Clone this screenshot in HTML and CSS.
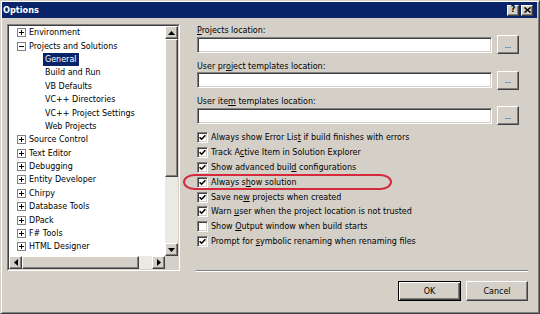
FILE: index.html
```html
<!DOCTYPE html>
<html>
<head>
<meta charset="utf-8">
<title>Options</title>
<link rel="stylesheet" href="styles.css">
</head>
<body>
<div class="window">
  <div class="titlebar">
    <span class="title">Options</span>
    <span class="tbtn raised">?</span>
    <span class="tbtn raised"><svg width="7" height="6" viewBox="0 0 7 6"><path d="M0.5 0.5 L6.5 5.5 M6.5 0.5 L0.5 5.5" stroke="#000" stroke-width="1.5"/></svg></span>
  </div>
  <div class="content">
    <div class="main">
      <div class="tree">
        <div class="tree-inner">
          <div class="nodes">
            <div class="node"><svg class="exp" viewBox="0 0 9 9"><rect x="0.5" y="0.5" width="8" height="8" fill="#fff" stroke="#808080"/><path d="M2 4.5h5M4.5 2v5" stroke="#000"/></svg><span class="lbl">Environment</span></div>
            <div class="node"><svg class="exp" viewBox="0 0 9 9"><rect x="0.5" y="0.5" width="8" height="8" fill="#fff" stroke="#808080"/><path d="M2 4.5h5" stroke="#000"/></svg><span class="lbl">Projects and Solutions</span></div>
            <div class="node child"><span class="lbl sel">General</span></div>
            <div class="node child"><span class="lbl">Build and Run</span></div>
            <div class="node child"><span class="lbl">VB Defaults</span></div>
            <div class="node child"><span class="lbl">VC++ Directories</span></div>
            <div class="node child"><span class="lbl">VC++ Project Settings</span></div>
            <div class="node child"><span class="lbl">Web Projects</span></div>
            <div class="node"><svg class="exp" viewBox="0 0 9 9"><rect x="0.5" y="0.5" width="8" height="8" fill="#fff" stroke="#808080"/><path d="M2 4.5h5M4.5 2v5" stroke="#000"/></svg><span class="lbl">Source Control</span></div>
            <div class="node"><svg class="exp" viewBox="0 0 9 9"><rect x="0.5" y="0.5" width="8" height="8" fill="#fff" stroke="#808080"/><path d="M2 4.5h5M4.5 2v5" stroke="#000"/></svg><span class="lbl">Text Editor</span></div>
            <div class="node"><svg class="exp" viewBox="0 0 9 9"><rect x="0.5" y="0.5" width="8" height="8" fill="#fff" stroke="#808080"/><path d="M2 4.5h5M4.5 2v5" stroke="#000"/></svg><span class="lbl">Debugging</span></div>
            <div class="node"><svg class="exp" viewBox="0 0 9 9"><rect x="0.5" y="0.5" width="8" height="8" fill="#fff" stroke="#808080"/><path d="M2 4.5h5M4.5 2v5" stroke="#000"/></svg><span class="lbl">Entity Developer</span></div>
            <div class="node"><svg class="exp" viewBox="0 0 9 9"><rect x="0.5" y="0.5" width="8" height="8" fill="#fff" stroke="#808080"/><path d="M2 4.5h5M4.5 2v5" stroke="#000"/></svg><span class="lbl">Chirpy</span></div>
            <div class="node"><svg class="exp" viewBox="0 0 9 9"><rect x="0.5" y="0.5" width="8" height="8" fill="#fff" stroke="#808080"/><path d="M2 4.5h5M4.5 2v5" stroke="#000"/></svg><span class="lbl">Database Tools</span></div>
            <div class="node"><svg class="exp" viewBox="0 0 9 9"><rect x="0.5" y="0.5" width="8" height="8" fill="#fff" stroke="#808080"/><path d="M2 4.5h5M4.5 2v5" stroke="#000"/></svg><span class="lbl">DPack</span></div>
            <div class="node"><svg class="exp" viewBox="0 0 9 9"><rect x="0.5" y="0.5" width="8" height="8" fill="#fff" stroke="#808080"/><path d="M2 4.5h5M4.5 2v5" stroke="#000"/></svg><span class="lbl">F# Tools</span></div>
            <div class="node"><svg class="exp" viewBox="0 0 9 9"><rect x="0.5" y="0.5" width="8" height="8" fill="#fff" stroke="#808080"/><path d="M2 4.5h5M4.5 2v5" stroke="#000"/></svg><span class="lbl">HTML Designer</span></div>
          </div>
          <div class="vscroll">
            <div class="sbtn raised"><svg width="7" height="4" viewBox="0 0 7 4"><path d="M3.5 0L7 4H0Z"/></svg></div>
            <div class="vthumb raised"></div>
            <div class="track"></div>
            <div class="sbtn raised"><svg width="7" height="4" viewBox="0 0 7 4"><path d="M0 0H7L3.5 4Z"/></svg></div>
          </div>
          <div class="hscroll">
            <div class="sbtn raised"><svg width="4" height="7" viewBox="0 0 4 7"><path d="M4 0V7L0 3.5Z"/></svg></div>
            <div class="hthumb raised"></div>
            <div class="track"></div>
            <div class="sbtn raised"><svg width="4" height="7" viewBox="0 0 4 7"><path d="M0 0V7L4 3.5Z"/></svg></div>
          </div>
          <div class="corner"></div>
        </div>
      </div>
      <div class="right">
        <div class="fields">
          <div class="group">
            <div class="label"><u>P</u>rojects location:</div>
            <div class="field-row"><div class="textbox"></div><div class="browse raised">...</div></div>
          </div>
          <div class="group">
            <div class="label">User pr<u>o</u>ject templates location:</div>
            <div class="field-row"><div class="textbox"></div><div class="browse raised">...</div></div>
          </div>
          <div class="group">
            <div class="label">User ite<u>m</u> templates location:</div>
            <div class="field-row"><div class="textbox"></div><div class="browse raised">...</div></div>
          </div>
        </div>
        <div class="checks">
          <div class="check"><span class="cb"><svg width="7" height="7" viewBox="0 0 7 7"><path d="M0.6 3.2L2.6 5.2L6.4 1.2" fill="none" stroke="#000" stroke-width="1.6"/></svg></span><span>Always show Error Lis<u>t</u> if build finishes with errors</span></div>
          <div class="check"><span class="cb"><svg width="7" height="7" viewBox="0 0 7 7"><path d="M0.6 3.2L2.6 5.2L6.4 1.2" fill="none" stroke="#000" stroke-width="1.6"/></svg></span><span>Track A<u>c</u>tive Item in Solution Explorer</span></div>
          <div class="check"><span class="cb"><svg width="7" height="7" viewBox="0 0 7 7"><path d="M0.6 3.2L2.6 5.2L6.4 1.2" fill="none" stroke="#000" stroke-width="1.6"/></svg></span><span>Show advanced buil<u>d</u> configurations</span></div>
          <div class="check"><span class="cb"><svg width="7" height="7" viewBox="0 0 7 7"><path d="M0.6 3.2L2.6 5.2L6.4 1.2" fill="none" stroke="#000" stroke-width="1.6"/></svg></span><span>Always s<u>h</u>ow solution</span><span class="ring"></span></div>
          <div class="check"><span class="cb"><svg width="7" height="7" viewBox="0 0 7 7"><path d="M0.6 3.2L2.6 5.2L6.4 1.2" fill="none" stroke="#000" stroke-width="1.6"/></svg></span><span>Save ne<u>w</u> projects when created</span></div>
          <div class="check"><span class="cb"><svg width="7" height="7" viewBox="0 0 7 7"><path d="M0.6 3.2L2.6 5.2L6.4 1.2" fill="none" stroke="#000" stroke-width="1.6"/></svg></span><span>Warn <u>u</u>ser when the project location is not trusted</span></div>
          <div class="check"><span class="cb"></span><span>Show <u>O</u>utput window when build starts</span></div>
          <div class="check"><span class="cb"><svg width="7" height="7" viewBox="0 0 7 7"><path d="M0.6 3.2L2.6 5.2L6.4 1.2" fill="none" stroke="#000" stroke-width="1.6"/></svg></span><span>Prompt for <u>s</u>ymbolic renaming when renaming files</span></div>
        </div>
        <div class="separator"></div>
      </div>
    </div>
    <div class="buttons">
      <div class="btn default">OK</div>
      <div class="btn raised">Cancel</div>
    </div>
  </div>
</div>
</body>
</html>
```
FILE: styles.css
```css
* { box-sizing: border-box; }
html, body { margin: 0; padding: 0; }
body {
  width: 540px;
  height: 314px;
  overflow: hidden;
  font-family: "DejaVu Sans", "Liberation Sans", sans-serif;
  font-size: 8px;
  color: #000;
  background: #d4d0c8;
}
u { text-decoration: underline; text-underline-offset: 1px; }

.window {
  width: 540px;
  height: 314px;
  display: flex;
  flex-direction: column;
  background: #d4d0c8;
  border: 1px solid;
  border-color: #d4d0c8 #404040 #404040 #d4d0c8;
  box-shadow: inset 1px 1px #fff, inset -1px -1px #808080;
  padding: 1px 2px 2px 1px;
}

.raised {
  background: #d4d0c8;
  border: 1px solid;
  border-color: #fff #404040 #404040 #fff;
  box-shadow: inset -1px -1px #808080;
}

.titlebar {
  height: 16px;
  flex: none;
  background: #0a246a;
  display: flex;
  align-items: center;
  padding: 0 4px 0 1px;
  color: #fff;
  font-weight: bold;
  font-size: 8.2px;
}
.title { flex: 1; }
.tbtn {
  width: 12px;
  height: 11px;
  margin-left: 2px;
  display: flex;
  align-items: center;
  justify-content: center;
  color: #000;
  font-size: 8px;
  font-weight: bold;
  line-height: 1;
}

.content {
  flex: 1;
  display: flex;
  flex-direction: column;
  padding: 6px 9px 10px 5px;
}
.main {
  display: flex;
  gap: 16px;
  height: 248px;
  flex: none;
}

.tree {
  width: 173px;
  height: 247px;
  flex: none;
  border: 1px solid;
  border-color: #808080 #fff #fff #808080;
}
.tree-inner {
  height: 100%;
  border: 1px solid;
  border-color: #404040 #d4d0c8 #d4d0c8 #404040;
  background: #fff;
  display: grid;
  grid-template-columns: 156px 13px;
  grid-template-rows: 230px 13px;
}
.nodes { overflow: hidden; grid-column: 1; grid-row: 1; }
.node {
  height: 13.4px;
  display: flex;
  align-items: center;
  padding-left: 8px;
  white-space: nowrap;
}
.node.child { padding-left: 34px; }
.exp { width: 9px; height: 9px; flex: none; margin-right: 1px; }
.lbl { padding: 0 2px; height: 13px; line-height: 13px; }
.sel { background: #0a246a; color: #fff; }

.vscroll {
  grid-column: 2;
  grid-row: 1;
  display: flex;
  flex-direction: column;
  background: #ebe9e4;
}
.hscroll {
  grid-column: 1;
  grid-row: 2;
  display: flex;
  background: #ebe9e4;
}
.corner { grid-column: 2; grid-row: 2; background: #d4d0c8; }
.sbtn {
  width: 13px;
  height: 13px;
  flex: none;
  display: flex;
  align-items: center;
  justify-content: center;
}
.vthumb { height: 138px; flex: none; }
.hthumb { width: 117px; flex: none; }
.track { flex: 1; }

.right {
  width: 332px;
  flex: none;
  display: flex;
  flex-direction: column;
}
.fields { margin: 0 9px 0 1px; }
.group + .group { margin-top: 5.5px; }
.label {
  height: 11px;
  line-height: 13px;
  white-space: nowrap;
}
.field-row {
  display: flex;
  align-items: center;
  gap: 5px;
  height: 19px;
}
.textbox {
  flex: 1;
  height: 16px;
  background: #fff;
  border: 1px solid;
  border-color: #808080 #fff #fff #808080;
  box-shadow: inset 1px 1px #404040, inset -1px -1px #d4d0c8;
}
.browse {
  width: 22px;
  height: 19px;
  flex: none;
  display: flex;
  align-items: center;
  justify-content: center;
  font-size: 7px;
  padding-top: 2px;
}

.checks { margin: 5px 0 0 1px; }
.check {
  height: 14.9px;
  display: flex;
  align-items: center;
  gap: 3px;
  position: relative;
  white-space: nowrap;
}
.cb {
  width: 11px;
  height: 11px;
  flex: none;
  background: #fff;
  border: 1px solid;
  border-color: #808080 #fff #fff #808080;
  box-shadow: inset 1px 1px #404040, inset -1px -1px #d4d0c8;
  display: flex;
  align-items: center;
  justify-content: center;
}
.ring {
  position: absolute;
  left: -14px;
  top: -1px;
  width: 209px;
  height: 16px;
  border: 2px solid #d42a3c;
  border-radius: 12px / 8px;
}

.separator {
  margin-top: auto;
  height: 2px;
  border-top: 1px solid #808080;
  border-bottom: 1px solid #fff;
}

.buttons {
  display: flex;
  justify-content: flex-end;
  gap: 5px;
  margin-top: 9px;
}
.btn {
  width: 62px;
  height: 20px;
  display: flex;
  align-items: center;
  justify-content: center;
}
.btn.default {
  width: 63px;
  background: #d4d0c8;
  border: 1px solid #000;
  box-shadow: inset 1px 1px #fff, inset -1px -1px #404040, inset -2px -2px #808080;
}
```
